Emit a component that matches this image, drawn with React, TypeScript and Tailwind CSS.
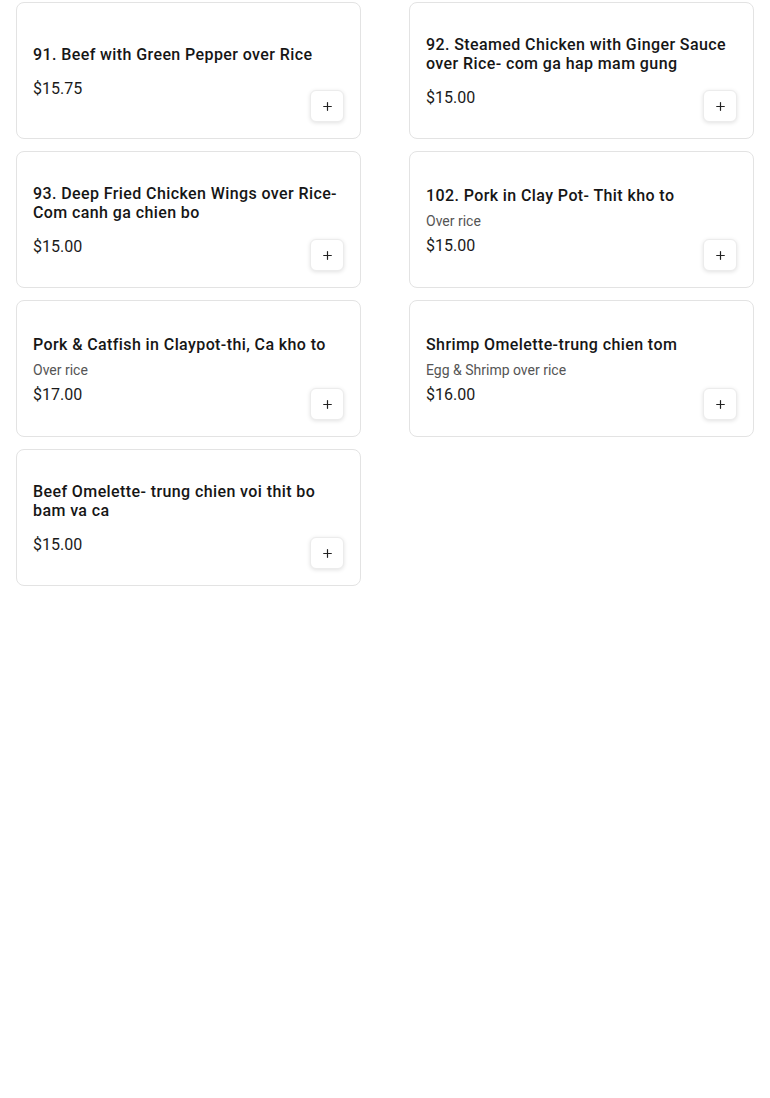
import { Plus } from 'lucide-react';

const items = [
  { id: '91', name: '91. Beef with Green Pepper over Rice', price: '$15.75' },
  { id: '92', name: '92. Steamed Chicken with Ginger Sauce over Rice- com ga hap mam gung', price: '$15.00' },
  { id: '93', name: '93. Deep Fried Chicken Wings over Rice- Com canh ga chien bo', price: '$15.00' },
  { id: '102', name: '102. Pork in Clay Pot- Thit kho to', desc: 'Over rice', price: '$15.00' },
  { id: 'pc', name: 'Pork & Catfish in Claypot-thi, Ca kho to', desc: 'Over rice', price: '$17.00' },
  { id: 'so', name: 'Shrimp Omelette-trung chien tom', desc: 'Egg & Shrimp over rice', price: '$16.00' },
  { id: 'bo', name: 'Beef Omelette- trung chien voi thit bo bam va ca', price: '$15.00' },
];

export default function App() {
  return (
    <div className="min-h-screen bg-white font-['Roboto',sans-serif] text-[#1a1a1a]">
      <div className="grid grid-cols-2 gap-x-12 gap-y-3 px-4 pt-[2px]">
        {items.map((item) => (
          <div
            key={item.id}
            className="relative h-[137px] border border-[#e3e3e3] rounded-lg bg-white px-4 flex items-center"
          >
            {/* Info */}
            <div className="flex-1 min-w-0 pt-[4px]">
              <h3 className="text-base font-medium tracking-[0.4px] leading-[19px] text-[#161616]">{item.name}</h3>
              {item.desc ? (
                <p className="mt-[6px] text-sm leading-5 text-[#555]">{item.desc}</p>
              ) : null}
              <p className={`${item.desc ? 'mt-[3px]' : 'mt-[13px]'} text-base leading-6 text-[#1a1a1a]`}>
                {item.price}
              </p>
            </div>

            {/* Add */}
            <button className="absolute right-4 bottom-4 w-[34px] h-[32px] rounded-md bg-white border border-[#ececec] shadow-[0_1px_4px_rgba(0,0,0,0.12)] flex items-center justify-center">
              <Plus className="w-[13px] h-[13px] text-[#222]" strokeWidth={2.2} />
            </button>
          </div>
        ))}
      </div>
    </div>
  );
}
